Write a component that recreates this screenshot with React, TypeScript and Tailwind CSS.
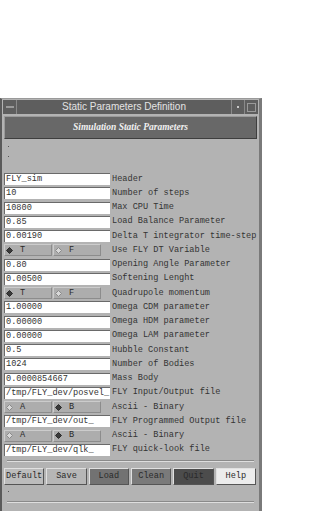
import React from 'react'

type Row =
  | { kind: 'text'; value: string; label: string }
  | { kind: 'radio'; a: string; b: string; on: 0 | 1; label: string }

const ROWS: Row[] = [
  { kind: 'text', value: 'FLY_sim', label: 'Header' },
  { kind: 'text', value: '10', label: 'Number of steps' },
  { kind: 'text', value: '10800', label: 'Max CPU Time' },
  { kind: 'text', value: '0.85', label: 'Load Balance Parameter' },
  { kind: 'text', value: '0.00190', label: 'Delta T integrator time-step' },
  { kind: 'radio', a: 'T', b: 'F', on: 0, label: 'Use FLY DT Variable' },
  { kind: 'text', value: '0.80', label: 'Opening Angle Parameter' },
  { kind: 'text', value: '0.00500', label: 'Softening Lenght' },
  { kind: 'radio', a: 'T', b: 'F', on: 0, label: 'Quadrupole momentum' },
  { kind: 'text', value: '1.00000', label: 'Omega CDM parameter' },
  { kind: 'text', value: '0.00000', label: 'Omega HDM parameter' },
  { kind: 'text', value: '0.00000', label: 'Omega LAM parameter' },
  { kind: 'text', value: '0.5', label: 'Hubble Constant' },
  { kind: 'text', value: '1024', label: 'Number of Bodies' },
  { kind: 'text', value: '0.0000854667', label: 'Mass Body' },
  { kind: 'text', value: '/tmp/FLY_dev/posvel_', label: 'FLY Input/Output file' },
  { kind: 'radio', a: 'A', b: 'B', on: 1, label: 'Ascii - Binary' },
  { kind: 'text', value: '/tmp/FLY_dev/out_', label: 'FLY Programmed Output file' },
  { kind: 'radio', a: 'A', b: 'B', on: 1, label: 'Ascii - Binary' },
  { kind: 'text', value: '/tmp/FLY_dev/qlk_', label: 'FLY quick-look file' },
]

const BUTTONS = [
  { label: 'Default', cls: 'bg-[#bcbcbc]' },
  { label: 'Save', cls: 'bg-[#b6b6b6]' },
  { label: 'Load', cls: 'bg-[#727272]' },
  { label: 'Clean', cls: 'bg-[#7a7a7a]' },
  { label: 'Quit', cls: 'bg-[#4c4c4c]' },
  { label: 'Help', cls: 'bg-[#ececec]' },
]

const mono = "font-['Liberation_Mono','DejaVu_Sans_Mono',monospace]"

function Diamond({ on }: { on: boolean }) {
  return (
    <svg width="7" height="7" viewBox="0 0 7 7" className="shrink-0">
      <path d="M3.5 0.5 L6.5 3.5 L3.5 6.5 L0.5 3.5 Z" fill={on ? '#3a3a3a' : '#d8d8d8'} stroke={on ? '#2a2a2a' : '#8a8a8a'} strokeWidth="1" />
    </svg>
  )
}

function Toggle({ text, on }: { text: string; on: boolean }) {
  return (
    <div className="flex h-full w-[48px] items-center gap-[7px] border-t border-l border-t-[#cccccc] border-l-[#cccccc] border-b border-r border-b-[#8c8c8c] border-r-[#8c8c8c] bg-[#adadad] pl-[1px]">
      <Diamond on={on} />
      <span className={`${mono} text-[8.6px] leading-none text-[#2a2a2a]`}>{text}</span>
    </div>
  )
}

export default function App() {
  return (
    <div className="h-[511px] w-[327px] overflow-hidden bg-white">
      <div className="mt-[98px] flex h-[413px] w-[262px] flex-col border-l-[2px] border-r-[3px] border-t border-l-[#5a5a5a] border-r-[#7a7a7a] border-t-[#9a9a9a] bg-[#b3b3b3]">
        {/* title bar */}
        <div className="mx-[1px] mt-[1px] flex h-[14px] items-stretch bg-[#5e5e5e]">
          <div className="flex w-[14px] items-center justify-center border-r border-r-[#8a8a8a]">
            <div className="h-[2px] w-[8px] bg-[#9a9a9a]" />
          </div>
          <div className="flex flex-1 items-center justify-center font-['Liberation_Sans',Arial,sans-serif] text-[10px] leading-none text-[#e4e4e4]">
            Static Parameters Definition
          </div>
          <div className="flex w-[13px] items-center justify-center border-l border-l-[#8a8a8a]">
            <div className="h-[2px] w-[2px] bg-[#c8c8c8]" />
          </div>
          <div className="flex w-[14px] items-center justify-center border-l border-l-[#8a8a8a]">
            <div className="h-[9px] w-[9px] border border-[#9a9a9a]" />
          </div>
        </div>

        {/* header band */}
        <div className="mx-[2px] mt-[2px] flex h-[23px] items-center justify-center border border-t-[#9a9a9a] border-l-[#9a9a9a] border-b-[#3e3e3e] border-r-[#3e3e3e] bg-[#686868]">
          <span className="font-['Liberation_Serif','Times_New_Roman',serif] text-[9.5px] font-bold italic leading-none text-[#f0f0f0]">
            Simulation Static Parameters
          </span>
        </div>

        {/* little marks */}
        <div className="ml-[6px] mt-[7px] h-[1px] w-[1px] bg-[#555]" />
        <div className="ml-[6px] mt-[9px] h-[1px] w-[1px] bg-[#555]" />

        {/* rows */}
        <div className="ml-[2px] mt-[16px] flex flex-col gap-[2.26px]">
          {ROWS.map((row, i) => (
            <div key={i} className="flex h-[12px] items-center">
              {row.kind === 'text' ? (
                <div className="flex h-full w-[106px] items-center overflow-hidden border-t border-l border-t-[#6a6a6a] border-l-[#6a6a6a] bg-white pl-[1px]">
                  <span className={`${mono} whitespace-nowrap text-[8.6px] leading-none text-[#333]`}>{row.value}</span>
                </div>
              ) : (
                <div className="flex h-full w-[106px] items-stretch gap-[1px]">
                  <Toggle text={row.a} on={row.on === 0} />
                  <Toggle text={row.b} on={row.on === 1} />
                </div>
              )}
              <span className={`${mono} ml-[2px] whitespace-nowrap text-[8.6px] leading-none text-[#333]`}>
                {row.label}
              </span>
            </div>
          ))}
        </div>

        {/* separator */}
        <div className="mx-[5px] mt-[4px] h-[2px] border-t border-b border-t-[#8a8a8a] border-b-[#dedede]" />

        {/* buttons */}
        <div className="ml-[2px] mr-[3px] mt-[6px] flex h-[17px] gap-[2px]">
          {BUTTONS.map(b => (
            <div
              key={b.label}
              className={`flex flex-1 items-center justify-center border border-t-[#e0e0e0] border-l-[#e0e0e0] border-b-[#555] border-r-[#555] ${b.cls} ${mono} text-[8.6px] leading-none text-[#2a2a2a]`}
            >
              {b.label}
            </div>
          ))}
        </div>

        <div className="ml-[6px] mt-[6px] h-[1px] w-[1px] bg-[#555]" />
        <div className="mx-[5px] mt-[9px] h-[2px] border-t border-b border-t-[#8a8a8a] border-b-[#dedede]" />
      </div>
    </div>
  )
}
